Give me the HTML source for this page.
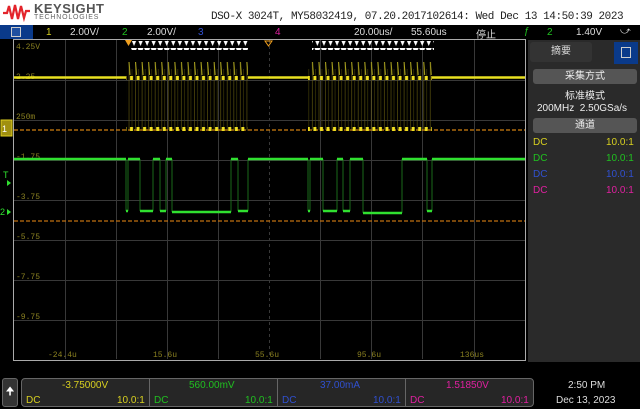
<!DOCTYPE html>
<html><head><meta charset="utf-8"><style>
*{margin:0;padding:0;box-sizing:border-box}
body{width:640px;height:409px;background:#000;overflow:hidden;position:relative;font-family:"Liberation Sans","Noto Sans CJK SC",sans-serif}
.a{position:absolute;white-space:nowrap}
</style></head><body>
<div class="a" style="left:0;top:0;width:640px;height:25px;background:#fff"></div>
<svg class="a" style="left:2px;top:2px" width="30" height="20" viewBox="0 0 30 20"><path d="M1 11 L5 11 L7 4 L10 17 L13 3 L16 17 L19 4 L22 16 L24 9 L28 9" stroke="#e3242b" stroke-width="2.2" fill="none"/></svg>
<div class="a" style="left:34px;top:1px;font-size:13px;font-weight:bold;color:#555;letter-spacing:0.5px">KEYSIGHT</div>
<div class="a" style="left:34px;top:14px;font-size:7px;color:#666;letter-spacing:0.8px">TECHNOLOGIES</div>
<div class="a" style="left:211px;top:11px;font-size:11px;color:#222;font-family:'Liberation Mono',monospace;letter-spacing:-0.45px">DSO-X 3024T, MY58032419, 07.20.2017102614: Wed Dec 13 14:50:39 2023</div>
<div class="a" style="left:0;top:25px;width:33px;height:14px;background:#0a3a8a"></div>
<div class="a" style="left:11px;top:27px;width:10px;height:10px;border:1px solid #ccc;background:#2050a0"></div>
<div class="a" style="left:46px;top:27px;font-size:10px;color:#d8d020">1</div>
<div class="a" style="left:70px;top:27px;font-size:10px;color:#ddd">2.00V/</div>
<div class="a" style="left:122px;top:27px;font-size:10px;color:#20c020">2</div>
<div class="a" style="left:147px;top:27px;font-size:10px;color:#ddd">2.00V/</div>
<div class="a" style="left:198px;top:27px;font-size:10px;color:#3050d0">3</div>
<div class="a" style="left:275px;top:27px;font-size:10px;color:#e020a0">4</div>
<div class="a" style="left:354px;top:27px;font-size:10px;color:#ddd">20.00us/</div>
<div class="a" style="left:411px;top:27px;font-size:10px;color:#ddd">55.60us</div>
<div class="a" style="left:476px;top:26px;font-size:10px;color:#ddd">停止</div>
<div class="a" style="left:524px;top:26px;font-size:10px;color:#20c020">ƒ</div>
<div class="a" style="left:547px;top:27px;font-size:10px;color:#20c020">2</div>
<div class="a" style="left:576px;top:27px;font-size:10px;color:#ddd">1.40V</div>
<div class="a" style="left:620px;top:26px;font-size:10px;color:#ddd">⤻</div>
<svg class="a" style="left:0;top:39px" width="530" height="325">
<defs>
<pattern id="yp" x="128" y="0" width="6.55" height="325" patternUnits="userSpaceOnUse">
<line x1="1" y1="23" x2="1" y2="91" stroke="#6a6010" stroke-width="0.6"/>
<line x1="4" y1="30" x2="4" y2="91" stroke="#4a4408" stroke-width="0.6"/>
<line x1="1" y1="23" x2="2" y2="36" stroke="#b0a820" stroke-width="1"/>
<rect x="2" y="37" width="3" height="4" fill="#f0e020"/>
<rect x="2" y="88" width="3" height="4" fill="#f0e020"/>
</pattern>
<pattern id="tp" x="131" width="6.55" height="9" patternUnits="userSpaceOnUse"><path d="M0 0 h6 l-3 7z" fill="#fff"/></pattern>
</defs>
<g stroke="#383838" stroke-width="1">
<line x1="65.5" y1="1" x2="65.5" y2="320"/><line x1="116.5" y1="1" x2="116.5" y2="320"/><line x1="167.5" y1="1" x2="167.5" y2="320"/><line x1="218.5" y1="1" x2="218.5" y2="320"/><line x1="269.5" y1="1" x2="269.5" y2="320" stroke-dasharray="3 3"/><line x1="320.5" y1="1" x2="320.5" y2="320"/><line x1="371.5" y1="1" x2="371.5" y2="320"/><line x1="422.5" y1="1" x2="422.5" y2="320"/><line x1="474.5" y1="1" x2="474.5" y2="320"/>
<line x1="14" y1="41.5" x2="525" y2="41.5"/><line x1="14" y1="81.5" x2="525" y2="81.5"/><line x1="14" y1="121.5" x2="525" y2="121.5"/><line x1="14" y1="161.5" x2="525" y2="161.5"/><line x1="14" y1="201.5" x2="525" y2="201.5"/><line x1="14" y1="241.5" x2="525" y2="241.5"/><line x1="14" y1="281.5" x2="525" y2="281.5"/>
</g>
<rect x="13.5" y="0.5" width="512" height="321" fill="none" stroke="#aaa"/>
<g font-family="Liberation Mono,monospace" font-size="8" fill="#8a8020">
<text x="16" y="10">4.25V</text><text x="16" y="40">2.25</text><text x="16" y="80">250m</text><text x="16" y="120">-1.75</text><text x="16" y="160">-3.75</text><text x="16" y="200">-5.75</text><text x="16" y="240">-7.75</text><text x="16" y="280">-9.75</text>
<text x="48" y="318">-24.4u</text><text x="153" y="318">15.6u</text><text x="255" y="318">55.6u</text><text x="357" y="318">95.6u</text><text x="460" y="318">136us</text>
</g>
<line x1="14" y1="91" x2="525" y2="91" stroke="#d08010" stroke-width="1.2" stroke-dasharray="4 2"/>
<line x1="14" y1="182" x2="525" y2="182" stroke="#c07010" stroke-width="1.2" stroke-dasharray="4 2"/>
<rect x="126" y="20" width="122" height="75" fill="url(#yp)"/>
<rect x="308" y="20" width="124" height="75" fill="url(#yp)"/>
<g stroke="#e8e020" stroke-width="2.5">
<line x1="14" y1="38.5" x2="126" y2="38.5"/><line x1="248" y1="38.5" x2="308" y2="38.5"/><line x1="432" y1="38.5" x2="525" y2="38.5"/>
</g>
<path d="M126 120 V172 M128 120 V172 M140 120 V172 M153 120 V172 M160 120 V172 M166 120 V172 M172 120 V173 M231 120 V173 M238 120 V172 M248 120 V172 M308 120 V172 M310 120 V172 M323 120 V172 M337 120 V172 M343 120 V172 M350 120 V172 M363 120 V174 M402 120 V174 M427 120 V172 M432 120 V172" stroke="#1a6a1a" stroke-width="1"/>
<path d="M14 120 H126 M128 120 H140 M153 120 H160 M166 120 H172 M231 120 H238 M248 120 H308 M310 120 H323 M337 120 H343 M350 120 H363 M402 120 H427 M432 120 H525 M126 172 H128 M140 172 H153 M160 172 H166 M172 173 H231 M238 172 H248 M308 172 H310 M323 172 H337 M343 172 H350 M363 174 H402 M427 172 H432" fill="none" stroke="#30e030" stroke-width="2.5"/>
<rect x="131" y="2" width="117" height="9" fill="url(#tp)"/>
<rect x="312" y="2" width="122" height="9" fill="url(#tp)"/>
<path d="M125 1 h7 l-3.5 6z" fill="#f0a020"/>
<path d="M265 2 h7 l-3.5 5z" fill="none" stroke="#f0a020"/>
<rect x="1" y="81" width="11" height="16" fill="#a09010" stroke="#e0d020"/>
<text x="2" y="93" font-size="9" fill="#fff">1</text>
<text x="3" y="139" font-size="9" fill="#30e030">T</text><path d="M7 141 l4 3 l-4 3z" fill="#30e030"/>
<text x="0" y="176" font-size="9" fill="#30e030">2</text><path d="M7 170 l4 3 l-4 3z" fill="#30e030"/>
</svg>
<div class="a" style="left:528px;top:40px;width:112px;height:322px;background:#2a2a2a"></div>
<div class="a" style="left:530px;top:42px;width:62px;height:20px;background:#333;border-radius:3px;color:#ddd;font-size:10px;text-align:center;line-height:20px">摘要</div>
<div class="a" style="left:614px;top:42px;width:24px;height:22px;background:#0a3a8a"></div>
<div class="a" style="left:621px;top:47px;width:10px;height:11px;border:1px solid #ccc"></div>
<div class="a" style="left:533px;top:69px;width:104px;height:15px;background:#555;border-radius:3px;color:#eee;font-size:10px;text-align:center;line-height:15px">采集方式</div>
<div class="a" style="left:530px;top:87px;width:110px;color:#eee;font-size:10px;text-align:center">标准模式</div>
<div class="a" style="left:537px;top:103px;color:#eee;font-size:10px">200MHz&nbsp;&nbsp;2.50GSa/s</div>
<div class="a" style="left:533px;top:118px;width:104px;height:15px;background:#555;border-radius:3px;color:#eee;font-size:10px;text-align:center;line-height:15px">通道</div>
<div class="a" style="left:533px;top:137px;color:#d8d020;font-size:10px">DC</div><div class="a" style="left:606px;top:137px;color:#d8d020;font-size:10px">10.0:1</div>
<div class="a" style="left:533px;top:153px;color:#20c020;font-size:10px">DC</div><div class="a" style="left:606px;top:153px;color:#20c020;font-size:10px">10.0:1</div>
<div class="a" style="left:533px;top:169px;color:#3050d0;font-size:10px">DC</div><div class="a" style="left:606px;top:169px;color:#3050d0;font-size:10px">10.0:1</div>
<div class="a" style="left:533px;top:185px;color:#e020a0;font-size:10px">DC</div><div class="a" style="left:606px;top:185px;color:#e020a0;font-size:10px">10.0:1</div>
<div class="a" style="left:2px;top:378px;width:16px;height:29px;background:#333;border:1px solid #666;border-radius:3px;color:#fff;font-size:11px;text-align:center;line-height:27px">🠉</div>
<div class="a" style="left:21px;top:378px;width:513px;height:29px;background:#262626;border:1px solid #666;border-radius:4px"></div>
<div class="a" style="left:149px;top:379px;width:1px;height:27px;background:#666"></div>
<div class="a" style="left:277px;top:379px;width:1px;height:27px;background:#666"></div>
<div class="a" style="left:405px;top:379px;width:1px;height:27px;background:#666"></div>
<div class="a" style="left:62px;top:380px;color:#d8d020;font-size:10px">-3.75000V</div>
<div class="a" style="left:26px;top:395px;color:#d8d020;font-size:10px">DC</div><div class="a" style="left:117px;top:395px;color:#d8d020;font-size:10px">10.0:1</div>
<div class="a" style="left:189px;top:380px;color:#20c020;font-size:10px">560.00mV</div>
<div class="a" style="left:154px;top:395px;color:#20c020;font-size:10px">DC</div><div class="a" style="left:245px;top:395px;color:#20c020;font-size:10px">10.0:1</div>
<div class="a" style="left:320px;top:380px;color:#3050d0;font-size:10px">37.00mA</div>
<div class="a" style="left:282px;top:395px;color:#3050d0;font-size:10px">DC</div><div class="a" style="left:373px;top:395px;color:#3050d0;font-size:10px">10.0:1</div>
<div class="a" style="left:446px;top:380px;color:#e020a0;font-size:10px">1.51850V</div>
<div class="a" style="left:410px;top:395px;color:#e020a0;font-size:10px">DC</div><div class="a" style="left:501px;top:395px;color:#e020a0;font-size:10px">10.0:1</div>
<div class="a" style="left:568px;top:380px;color:#ddd;font-size:10px">2:50 PM</div>
<div class="a" style="left:556px;top:395px;color:#ddd;font-size:10px">Dec 13, 2023</div>
</body></html>
